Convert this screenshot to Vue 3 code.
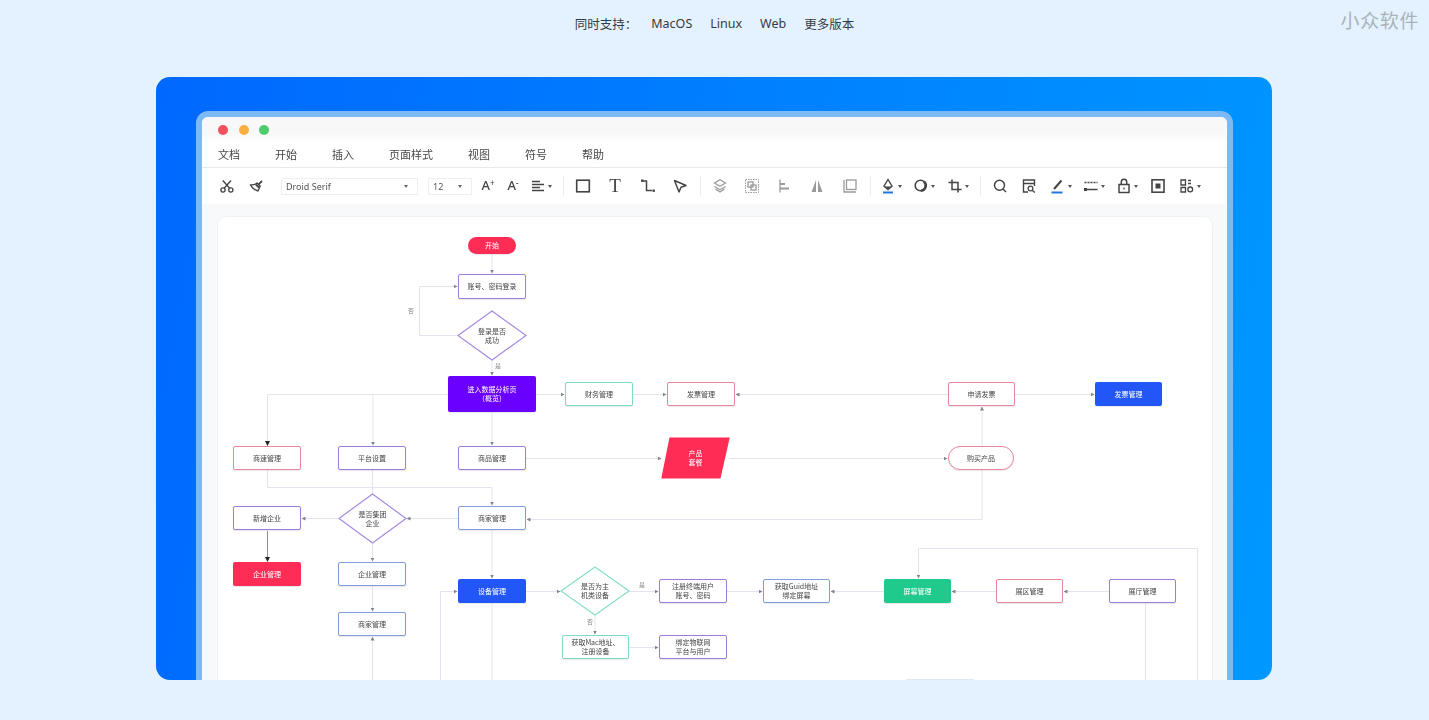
<template>
  <div class="page">
    <div class="brand">小众软件</div>

    <div class="platforms">
      <span class="label">同时支持：</span>
      <span v-for="p in platforms" :key="p">{{ p }}</span>
    </div>

    <div class="hero">
      <div class="window">
        <div class="titlebar">
          <i class="dot red"></i>
          <i class="dot yellow"></i>
          <i class="dot green"></i>
        </div>

        <div class="menu">
          <span v-for="m in menus" :key="m">{{ m }}</span>
        </div>

        <div class="toolbar">
          <template v-for="(t, i) in tools" :key="i">
            <div v-if="t.id === 'sep'" class="sep" :style="{ marginLeft: t.ml + 'px' }"></div>
            <div v-else-if="t.id === 'select'" class="select" :style="{ width: t.w + 'px', marginLeft: t.ml + 'px' }">
              <span>{{ t.text }}</span>
              <i class="select-caret"></i>
            </div>
            <div v-else-if="t.glyph" class="tool" :style="{ width: t.w + 'px', marginLeft: (t.ml || 0) + 'px' }">
              <span class="glyph" :class="t.id">{{ t.glyph }}<small v-if="t.sup">{{ t.sup }}</small></span>
            </div>
            <div v-else class="tool" :class="{ off: t.off }" :style="{ width: t.w + 'px', marginLeft: (t.ml || 0) + 'px' }">
              <svg width="16" height="16" viewBox="0 0 16 16" fill="none" stroke="currentColor" stroke-width="1.3">
                <template v-if="t.id === 'cut'">
                  <circle cx="4" cy="12" r="2.1" />
                  <circle cx="11.8" cy="12" r="2.1" />
                  <path d="M5.2 10.3 12 2.5M10.6 10.3 3.8 2.5" />
                </template>
                <template v-else-if="t.id === 'brush'">
                  <path d="M9.2 5 12.2 8 10 13C7.6 12.4 4.4 10 2.4 6.8 5 7.2 7.4 6.8 9.2 5Z" stroke-linejoin="round" />
                  <path d="M8 6.5 11 9.5" stroke-width="2" />
                  <path d="M10.6 6.4 14 3" stroke-width="1.8" />
                </template>
                <path v-else-if="t.id === 'align'" d="M2 3.5h8M2 6.5h12M2 9.5h8M2 12.5h12" stroke-width="1.4" />
                <rect v-else-if="t.id === 'rect'" x="1.7" y="2.2" width="12.6" height="11.6" stroke-width="1.6" />
                <template v-else-if="t.id === 'line'">
                  <path d="M3 3h3.5v9.5H12" stroke-width="1.5" />
                  <rect x="1" y="1.5" width="2.4" height="2.4" fill="currentColor" stroke="none" />
                  <rect x="12.5" y="11.5" width="2.4" height="2.4" fill="currentColor" stroke="none" />
                </template>
                <path v-else-if="t.id === 'pointer'" d="M2.5 2.5 14 7.5 9 9.2 7 14Z" stroke-width="1.5" stroke-linejoin="round" />
                <template v-else-if="t.id === 'layers'">
                  <path d="M8 1.8 13.5 5 8 8.2 2.5 5Z" />
                  <path d="M2.5 8.5 8 11.7 13.5 8.5M3.5 11 8 14l4.5-3" />
                </template>
                <template v-else-if="t.id === 'group'">
                  <rect x="1.5" y="1.5" width="13" height="13" stroke-dasharray="1.5 1" stroke-width="1" />
                  <rect x="4" y="4" width="5" height="5" />
                  <rect x="7" y="7" width="5" height="5" />
                </template>
                <template v-else-if="t.id === 'alignleft'">
                  <path d="M3 1.5v13" />
                  <path d="M3 6h5M3 10.5h9" stroke-width="2" />
                </template>
                <path v-else-if="t.id === 'flip'" d="M7 2v12H2.5ZM9 2v12h4.5Z" fill="currentColor" stroke="none" />
                <template v-else-if="t.id === 'frame'">
                  <path d="M2 2v12h12" />
                  <rect x="4.5" y="2" width="9.5" height="9.5" />
                </template>
                <template v-else-if="t.id === 'fill'">
                  <path d="M8 1.5 12 8 8 11.5 4 8Z" stroke-width="1.4" />
                  <path d="M5 8.5h6L8 11Z" fill="currentColor" stroke="none" />
                  <path d="M3 14.5h10" stroke="#1f7ae0" stroke-width="1.8" />
                </template>
                <template v-else-if="t.id === 'shape'">
                  <circle cx="7.5" cy="7.5" r="5.3" stroke-width="1.6" />
                  <path d="M11 3.6a5.3 5.3 0 0 1-3 9.2" stroke-width="2.6" />
                </template>
                <path v-else-if="t.id === 'crop'" d="M5 1.5V11.5H14.5M1.5 4.5H11V14.5" stroke-width="1.5" />
                <template v-else-if="t.id === 'search'">
                  <circle cx="7.5" cy="7.2" r="5" stroke-width="1.5" />
                  <path d="M11 11l3 3" stroke-width="1.5" />
                </template>
                <template v-else-if="t.id === 'find'">
                  <path d="M7 14H2.5V2h11v6M2.5 5.5h11" stroke-width="1.4" />
                  <circle cx="9.5" cy="10.5" r="2.4" />
                  <path d="M11.4 12.4 13.8 14.6" />
                </template>
                <template v-else-if="t.id === 'pen'">
                  <path d="M4 11 11.5 2.5" stroke-width="2" />
                  <path d="M1.5 14.5h11" stroke="#1f7ae0" stroke-width="1.8" />
                </template>
                <template v-else-if="t.id === 'stroke'">
                  <path d="M1.5 4.5h13" stroke-dasharray="2 1" stroke-width="1.5" />
                  <path d="M1.5 11.5h13" stroke-width="1.5" />
                  <rect x="1" y="10" width="3" height="3" fill="currentColor" stroke="none" />
                </template>
                <template v-else-if="t.id === 'lock'">
                  <rect x="3" y="6.5" width="10" height="8" stroke-width="1.5" />
                  <path d="M5.3 6.5V4a2.7 2.7 0 0 1 5.4 0v2.5" stroke-width="1.5" />
                  <path d="M8 9.5v2" />
                </template>
                <template v-else-if="t.id === 'fit'">
                  <rect x="2" y="1.8" width="12" height="12.4" stroke-width="1.6" />
                  <rect x="5.5" y="5.5" width="5" height="5" fill="currentColor" stroke="none" />
                </template>
                <template v-else>
                  <path d="M2 2h4.5v5H2ZM2 9.5h4.5v4.5H2Z" />
                  <path d="M9 2.5h3M9 5.5h3" stroke-width="1.6" />
                  <circle cx="11.2" cy="11.4" r="2.4" />
                </template>
              </svg>
              <i v-if="t.caret" class="caret"></i>
            </div>
          </template>
        </div>

        <div class="workspace">
          <div class="card">
            <svg class="wires" viewBox="218 217 994 470" width="994" height="470" fill="none">
              <defs>
                <marker id="arrow" markerUnits="userSpaceOnUse" markerWidth="4" markerHeight="4" refX="3.5" refY="2" orient="auto">
                  <path d="M0 0 4 2 0 4Z" fill="#7f8494" />
                </marker>
                <marker id="arrow-dark" markerUnits="userSpaceOnUse" markerWidth="5" markerHeight="5" refX="4" refY="2.5" orient="auto">
                  <path d="M0 0 5 2.5 0 5Z" fill="#222" />
                </marker>
              </defs>
              <path
                v-for="(w, i) in wires"
                :key="i"
                :d="w"
                stroke="#e3e5ee"
                stroke-width="1"
                marker-end="url(#arrow)"
              />
              <path v-for="(w, i) in plainWires" :key="'p' + i" :d="w" stroke="#e3e5ee" />
              <path d="M448 394.5H267.5V445" stroke="#e3e5ee" marker-end="url(#arrow-dark)" />
              <path d="M267.5 531V561" stroke="#8a8d96" marker-end="url(#arrow-dark)" />
              <polygon
                v-for="s in shapes"
                :key="s.points"
                :points="s.points"
                :fill="s.fill"
                :stroke="s.stroke"
                stroke-width="1.2"
              />
            </svg>

            <div
              v-for="n in nodes"
              :key="n.x + '-' + n.y"
              class="node"
              :class="n.kind"
              :style="{ left: n.x - 218 + 'px', top: n.y - 217 + 'px', width: n.w + 'px', height: n.h + 'px' }"
            >{{ n.text }}</div>

            <span
              v-for="m in marks"
              :key="m.x + '-' + m.y"
              class="mark"
              :style="{ left: m.x - 218 + 'px', top: m.y - 217 + 'px' }"
            >{{ m.text }}</span>
          </div>
        </div>
      </div>
    </div>
  </div>
</template>

<script setup>
const platforms = ['MacOS', 'Linux', 'Web', '更多版本']
const menus = ['文档', '开始', '插入', '页面样式', '视图', '符号', '帮助']

const tools = [
  { id: 'cut', w: 29 },
  { id: 'brush', w: 29 },
  { id: 'select', text: 'Droid Serif', w: 137, ml: 10.5 },
  { id: 'select', text: '12', w: 44, ml: 10 },
  { id: 'grow', glyph: 'A', sup: '+', w: 25, ml: 3.5 },
  { id: 'shrink', glyph: 'A', sup: '-', w: 25 },
  { id: 'align', w: 25, caret: true },
  { id: 'sep', ml: 12.5 },
  { id: 'rect', w: 32, ml: 3 },
  { id: 'serif', glyph: 'T', w: 32 },
  { id: 'line', w: 33 },
  { id: 'pointer', w: 32 },
  { id: 'sep', ml: 4 },
  { id: 'layers', w: 32.5, off: true, ml: 2.5 },
  { id: 'group', w: 32.5, off: true },
  { id: 'alignleft', w: 32.5, off: true },
  { id: 'flip', w: 32.5, off: true },
  { id: 'frame', w: 32.5, off: true },
  { id: 'sep', ml: 4 },
  { id: 'fill', w: 33.5, caret: true },
  { id: 'shape', w: 33.5, caret: true },
  { id: 'crop', w: 33.5, caret: true },
  { id: 'sep', ml: 8 },
  { id: 'search', w: 29, ml: 5 },
  { id: 'find', w: 29 },
  { id: 'pen', w: 29, caret: true },
  { id: 'stroke', w: 37, caret: true },
  { id: 'lock', w: 29, caret: true },
  { id: 'fit', w: 39 },
  { id: 'more', w: 19, caret: true },
]

const wires = [
  'M492 254V273',
  'M458 335.5H419.5V286.5H457',
  'M492 360V375',
  'M373 394.5V445',
  'M492 412V445',
  'M536 394.5H564',
  'M633 394.5H666',
  'M948 394.5H736',
  'M1015 394.5H1094',
  'M982 446V407',
  'M526 458.5H661',
  'M729 458.5H947',
  'M982 470V519.5H527',
  'M458 518.5H407',
  'M338 518.5H302',
  'M267.5 470V487.5H492V505',
  'M372.5 543V561',
  'M372.5 586V611',
  'M372.5 690V637',
  'M492 530V578',
  'M440.5 690V591.5H457',
  'M526 591.5H560',
  'M629 591.5H658',
  'M727 591.5H762',
  'M884 591.5H831',
  'M996 591.5H952',
  'M1109 591.5H1064',
  'M1197.5 690V548.5H918.5V578',
  'M595 615V634',
  'M629 647.5H658',
]

const plainWires = ['M372.5 470V494', 'M492 603V690', 'M1145.5 603V690']

const shapes = [
  { points: '492,311 526,335.5 492,360 458,335.5', fill: '#fff', stroke: '#a58be0' },
  { points: '372.5,494 406,518.5 372.5,543 339,518.5', fill: '#fff', stroke: '#a58be0' },
  { points: '595,567 629,591 595,615 561,591', fill: '#fff', stroke: '#86e0c8' },
  { points: '670,438 729,438 720,478 662,478', fill: '#ff2d55', stroke: '#ff2d55' },
]

const nodes = [
  { x: 468, y: 237, w: 48, h: 17, text: '开始', kind: 'solid pink pill' },
  { x: 458, y: 274, w: 68, h: 25, text: '账号、密码登录', kind: 'purple' },
  { x: 458, y: 311, w: 68, h: 49, text: '登录是否\n成功', kind: 'bare' },
  { x: 448, y: 376, w: 88, h: 36, text: '进入数据分析页\n（概览）', kind: 'solid violet' },
  { x: 565, y: 382, w: 68, h: 24, text: '财务管理', kind: 'teal' },
  { x: 667, y: 382, w: 68, h: 24, text: '发票管理', kind: 'rose' },
  { x: 948, y: 382, w: 67, h: 24, text: '申请发票', kind: 'rose' },
  { x: 1095, y: 382, w: 67, h: 24, text: '发票管理', kind: 'solid blue' },
  { x: 233, y: 446, w: 68, h: 24, text: '商速管理', kind: 'rose' },
  { x: 338, y: 446, w: 68, h: 24, text: '平台设置', kind: 'purple' },
  { x: 458, y: 446, w: 68, h: 24, text: '商品管理', kind: 'purple' },
  { x: 662, y: 438, w: 67, h: 40, text: '产品\n套餐', kind: 'bare light' },
  { x: 948, y: 446, w: 66, h: 24, text: '购买产品', kind: 'rose pill' },
  { x: 233, y: 506, w: 68, h: 24, text: '新增企业', kind: 'purple' },
  { x: 339, y: 494, w: 67, h: 49, text: '是否集团\n企业', kind: 'bare' },
  { x: 458, y: 506, w: 68, h: 24, text: '商家管理', kind: 'sky' },
  { x: 233, y: 562, w: 68, h: 24, text: '企业管理', kind: 'solid pink' },
  { x: 338, y: 562, w: 68, h: 24, text: '企业管理', kind: 'sky' },
  { x: 338, y: 612, w: 68, h: 24, text: '商家管理', kind: 'sky' },
  { x: 458, y: 579, w: 68, h: 24, text: '设备管理', kind: 'solid blue' },
  { x: 561, y: 567, w: 68, h: 48, text: '是否为主\n机类设备', kind: 'bare' },
  { x: 659, y: 579, w: 68, h: 24, text: '注册终端用户\n账号、密码', kind: 'purple' },
  { x: 763, y: 579, w: 67, h: 24, text: '获取Guid地址\n绑定屏幕', kind: 'sky' },
  { x: 884, y: 579, w: 67, h: 24, text: '屏幕管理', kind: 'solid green' },
  { x: 996, y: 579, w: 67, h: 24, text: '展区管理', kind: 'rose' },
  { x: 1109, y: 579, w: 67, h: 24, text: '展厅管理', kind: 'purple' },
  { x: 562, y: 635, w: 67, h: 24, text: '获取Mac地址、\n注册设备', kind: 'teal' },
  { x: 659, y: 635, w: 68, h: 24, text: '绑定物联网\n平台与用户', kind: 'purple' },
  { x: 905, y: 679, w: 70, h: 24, text: '', kind: 'faint' },
]

const marks = [
  { x: 408, y: 307, text: '否' },
  { x: 495, y: 362, text: '是' },
  { x: 639, y: 581, text: '是' },
  { x: 587, y: 618, text: '否' },
]
</script>

<style>
html,
body {
  margin: 0;
  background: #e3f2fe;
  overflow: hidden;
}
</style>

<style scoped>
.page {
  position: relative;
  height: 720px;
  font-family: "Noto Sans", "Noto Sans CJK SC", sans-serif;
  background: #e3f2fe;
  overflow: hidden;
}

.brand {
  position: absolute;
  top: 7px;
  right: 10px;
  font-family: "Noto Sans CJK SC", sans-serif;
  font-size: 19px;
  letter-spacing: 0.6px;
  line-height: 26px;
  color: #a9b2ba;
}

.platforms {
  height: 46px;
  display: flex;
  align-items: center;
  justify-content: center;
  gap: 18px;
  font-size: 12.5px;
  color: #353b45;
}

.platforms .label {
  margin-right: -4px;
}

.hero {
  box-sizing: border-box;
  width: 1116px;
  height: 603px;
  margin: 31px 0 0 156px;
  padding: 34px 39px 0 40px;
  border-radius: 14px;
  background: linear-gradient(100deg, #0068ff, #0098ff);
  overflow: hidden;
}

.window {
  box-sizing: border-box;
  height: 600px;
  border: 6px solid #7cb9f6;
  border-radius: 12px 12px 0 0;
  background: #f8f9fa;
  overflow: hidden;
  filter: blur(0.5px);
}

.titlebar {
  box-sizing: border-box;
  height: 23px;
  padding: 2px 0 0 16px;
  display: flex;
  align-items: center;
  gap: 10.5px;
  background: linear-gradient(#f8f8f8 70%, #fdfdfd);
}

.dot {
  width: 10px;
  height: 10px;
  border-radius: 50%;
}

.red { background: #f4505a; }
.yellow { background: #f9ae3f; }
.green { background: #4ecb6b; }

.menu {
  height: 27px;
  padding-left: 16px;
  display: flex;
  align-items: center;
  gap: 35px;
  background: #fff;
  border-bottom: 1px solid #e9e9e9;
  font-family: "Noto Sans CJK SC", sans-serif;
  font-size: 11px;
  color: #484848;
}

.toolbar {
  height: 36px;
  padding-left: 10.5px;
  display: flex;
  align-items: center;
  background: #fff;
  color: #444;
}

.tool {
  position: relative;
  flex: none;
  height: 20px;
  display: flex;
  align-items: center;
  justify-content: center;
}

.tool.off {
  color: #9a9a9a;
}

.caret {
  position: absolute;
  left: calc(50% + 10px);
  top: 9px;
  border: 2px solid transparent;
  border-top: 3px solid #555;
  border-bottom: 0;
}

.glyph {
  font-family: "Noto Sans", sans-serif;
  font-size: 13px;
  line-height: 20px;
  font-weight: 500;
}

.glyph small {
  font-size: 8px;
  position: relative;
  top: -4px;
}

.glyph.serif {
  font-family: "Liberation Serif", serif;
  font-size: 19px;
  font-weight: 400;
}

.sep {
  flex: none;
  width: 1px;
  height: 20px;
  background: #ededed;
}

.select {
  box-sizing: border-box;
  flex: none;
  height: 17px;
  padding: 0 9px 0 4px;
  display: flex;
  align-items: center;
  justify-content: space-between;
  border: 1px solid #efefef;
  font-size: 9px;
  color: #555;
}

.select-caret {
  border: 2px solid transparent;
  border-top: 3px solid #666;
  border-bottom: 0;
}

.workspace {
  padding: 13px 15px 0 16px;
}

.card {
  position: relative;
  height: 480px;
  border-radius: 8px;
  background: #fff;
  box-shadow: 0 0 0 1px #f0f1f3;
  overflow: hidden;
}

.wires {
  position: absolute;
  left: 0;
  top: 0;
}

.node {
  position: absolute;
  box-sizing: border-box;
  display: flex;
  align-items: center;
  justify-content: center;
  white-space: pre-line;
  text-align: center;
  font-family: "Noto Sans CJK SC", sans-serif;
  font-size: 7px;
  line-height: 9px;
  color: #444;
  background: #fff;
  border: 1px solid transparent;
  border-radius: 2px;
  box-shadow: 0 1px 1px rgba(60, 60, 90, 0.12);
}

.purple { border-color: #9a7cdb; }
.rose { border-color: #e8869b; }
.teal { border-color: #7bdcc5; }
.sky { border-color: #7f9fdb; }
.faint { border-color: #dfe8f4; box-shadow: none; }

.pill { border-radius: 13px; }

.solid { color: #fff; }
.solid.pink { background: #ff2d55; }
.solid.violet { background: #6a00ff; }
.solid.blue { background: #2356f6; }
.solid.green { background: #1fca8c; }

.bare {
  background: none;
  border: 0;
  box-shadow: none;
}

.bare.light { color: #fff; }

.mark {
  position: absolute;
  font-family: "Noto Sans CJK SC", sans-serif;
  font-size: 6px;
  line-height: 8px;
  color: #888;
}
</style>
